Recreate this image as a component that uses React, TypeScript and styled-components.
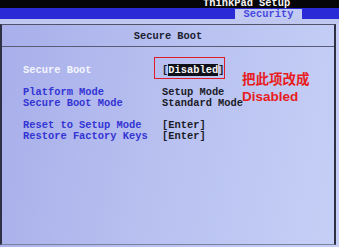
import styled, { createGlobalStyle } from "styled-components";

const GlobalStyle = createGlobalStyle`
  html, body {
    margin: 0;
    padding: 0;
    width: 339px;
    height: 247px;
    overflow: hidden;
    background: #b4bcec;
  }
`;

const Screen = styled.div`
  width: 339px;
  height: 247px;
  display: flex;
  flex-direction: column;
  font-family: "Liberation Mono", "DejaVu Sans Mono", monospace;
  font-weight: bold;
  font-size: 10.4px;
  background: linear-gradient(100deg, #a8aeea 0%, #b8c1f0 50%, #c6d0f6 100%);
`;

const TopBar = styled.div`
  height: 8px;
  background: #050508;
  color: #f4f4f4;
  line-height: 7px;
  padding-left: 203px;
  overflow: hidden;
`;

const TabBar = styled.div`
  height: 11px;
  background: #2a2ad6;
  display: flex;
  align-items: flex-end;
  padding-left: 235px;
`;

const Tab = styled.div`
  width: 67px;
  height: 10px;
  background: #c2caf2;
  color: #4848e0;
  line-height: 11px;
  text-align: center;
`;

const Strip = styled.div`
  height: 5px;
  background: #c0c8f0;
`;

const Panel = styled.div`
  width: 332px;
  height: 219px;
  border-top: 1px solid #50546a;
  border-left: 2px solid #2e3044;
  border-right: 2px solid #2e3044;
  border-bottom: 1px solid #7a80a0;
  display: flex;
  flex-direction: column;
`;

const Header = styled.div`
  height: 21px;
  line-height: 22px;
  text-align: center;
  color: #202030;
  border-bottom: 1px solid #585c74;
`;

const Body = styled.div`
  position: relative;
  padding: 18px 0 0 21px;
  display: flex;
  flex-direction: column;
`;

const Group = styled.div`
  display: flex;
  flex-direction: column;
  margin-bottom: 11px;
`;

const Row = styled.div`
  display: flex;
  height: 11px;
  line-height: 11px;
  white-space: pre;
`;

const Label = styled.div<{ $active?: boolean }>`
  width: 139px;
  color: ${(p) => (p.$active ? "#f4f6ff" : "#3434d4")};
`;

const Value = styled.div`
  color: #1c1c28;
`;

const Highlight = styled.span`
  background: #101018;
  color: #f4f4f4;
`;

const RedBox = styled.div`
  position: absolute;
  left: 152px;
  top: 10px;
  width: 69px;
  height: 20px;
  border: 1px solid #e01c28;
`;

const Note = styled.div`
  position: absolute;
  left: 240px;
  top: 24px;
  color: #e81c20;
  font-family: "Liberation Sans", "Noto Sans CJK SC", sans-serif;
  font-weight: bold;
  font-size: 13.5px;
  line-height: 17px;
`;

export default function App() {
  return (
    <Screen>
      <GlobalStyle />
      <TopBar>ThinkPad Setup</TopBar>
      <TabBar>
        <Tab>Security</Tab>
      </TabBar>
      <Strip />
      <Panel>
        <Header>Secure Boot</Header>
        <Body>
          <Group>
            <Row>
              <Label $active>Secure Boot</Label>
              <Value>
                [<Highlight>Disabled</Highlight>]
              </Value>
            </Row>
          </Group>
          <Group>
            <Row>
              <Label>Platform Mode</Label>
              <Value>Setup Mode</Value>
            </Row>
            <Row>
              <Label>Secure Boot Mode</Label>
              <Value>Standard Mode</Value>
            </Row>
          </Group>
          <Group>
            <Row>
              <Label>Reset to Setup Mode</Label>
              <Value>[Enter]</Value>
            </Row>
            <Row>
              <Label>Restore Factory Keys</Label>
              <Value>[Enter]</Value>
            </Row>
          </Group>
          <RedBox />
          <Note>
            把此项改成
            <br />
            Disabled
          </Note>
        </Body>
      </Panel>
    </Screen>
  );
}
